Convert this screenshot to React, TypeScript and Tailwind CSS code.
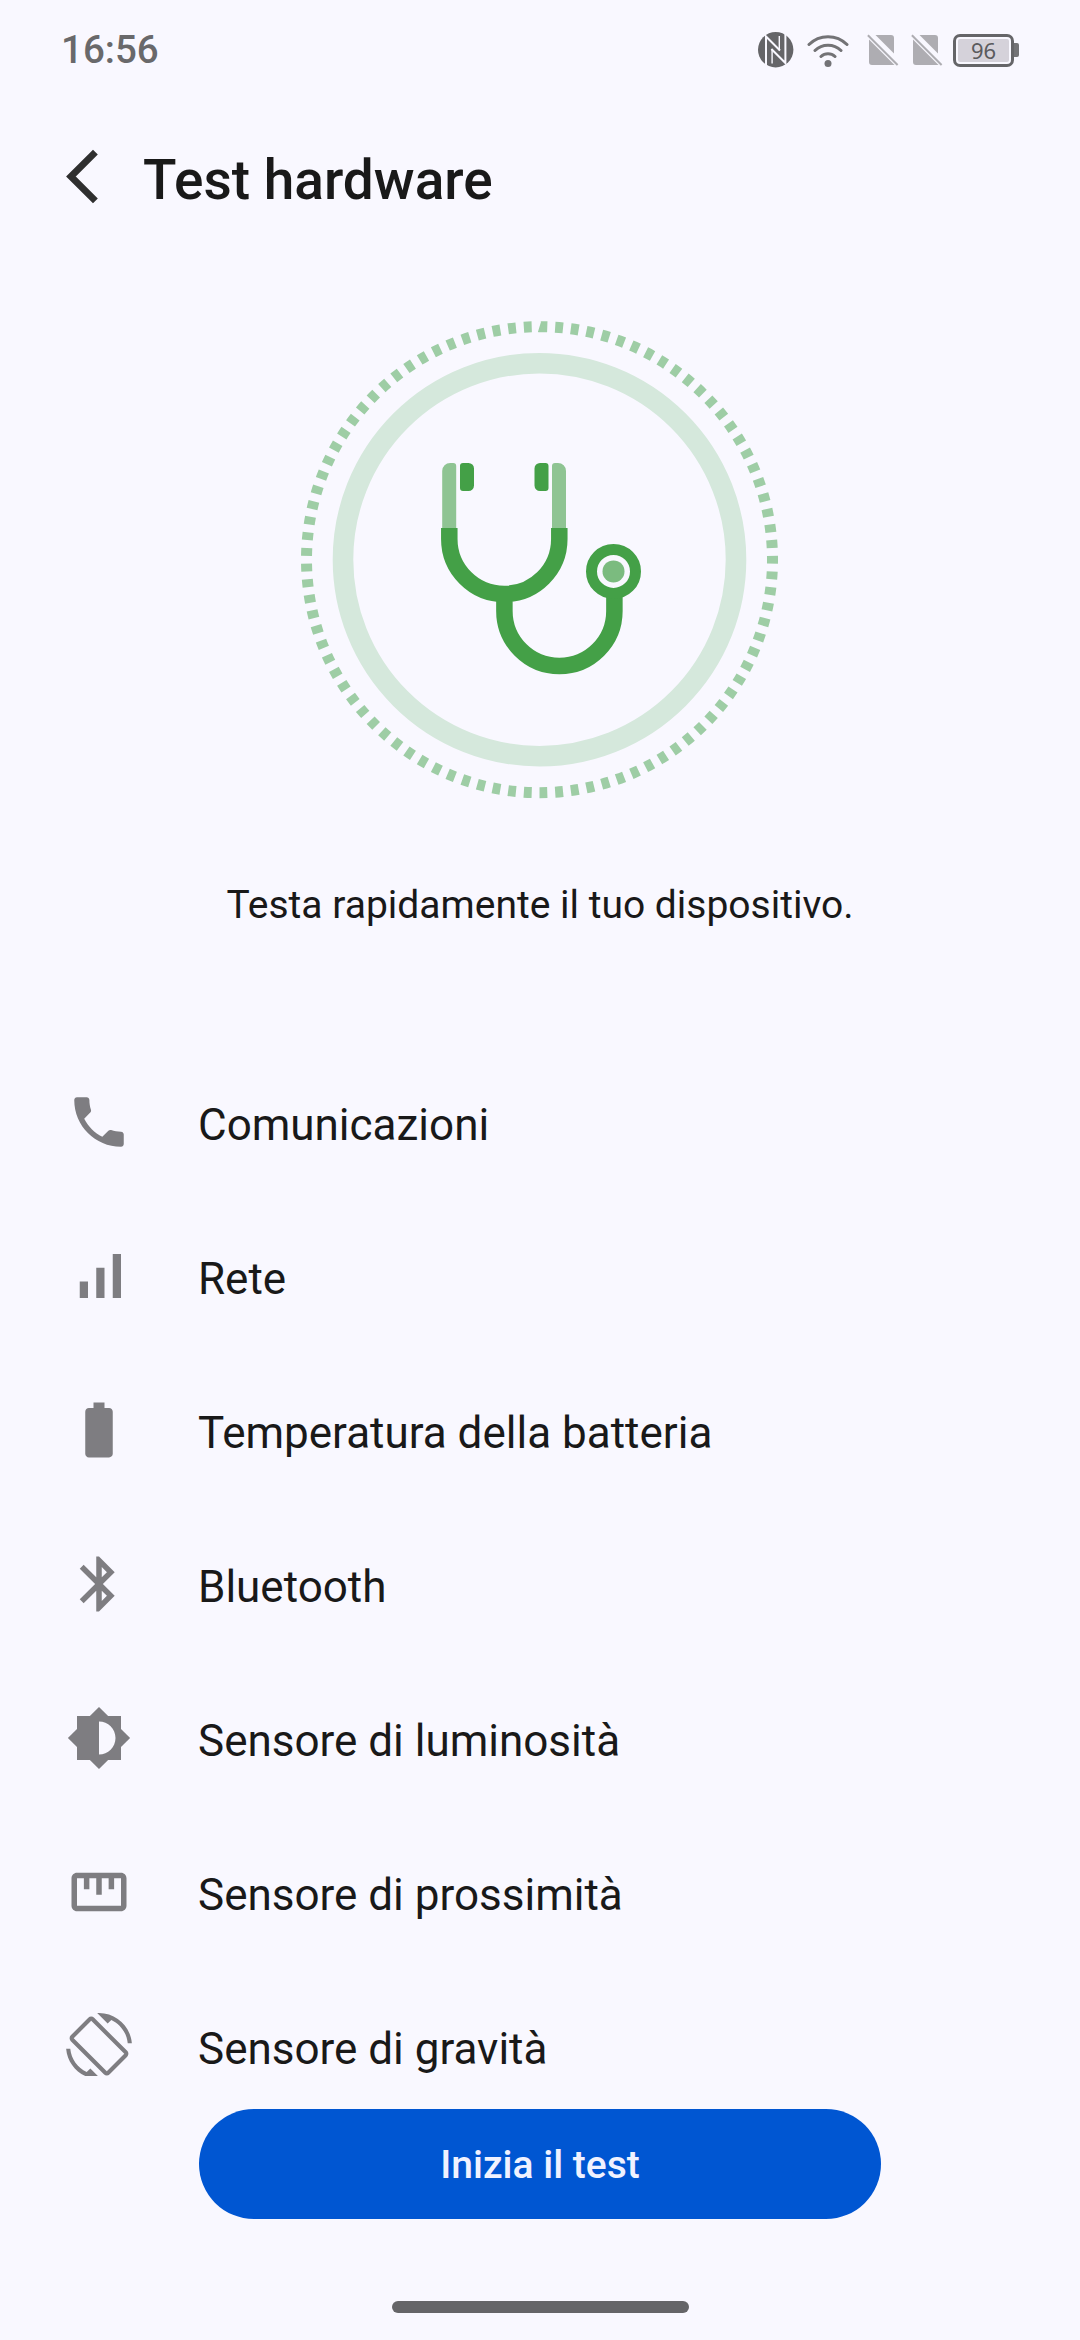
import type { ReactNode } from "react";

const IconBox = ({ children }: { children: ReactNode }) => (
  <svg viewBox="0 0 24 24" className="size-[66px] shrink-0 fill-[#7e7d81]">
    {children}
  </svg>
);

const tests = [
  {
    title: "Comunicazioni",
    icon: <path d="M6.62 10.79c1.44 2.83 3.76 5.14 6.59 6.59l2.2-2.2c.27-.27.67-.36 1.02-.24 1.12.37 2.33.57 3.57.57.55 0 1 .45 1 1V20c0 .55-.45 1-1 1-9.39 0-17-7.61-17-17 0-.55.45-1 1-1h3.5c.55 0 1 .45 1 1 0 1.25.2 2.45.57 3.57.11.35.03.74-.25 1.02l-2.2 2.2z" />,
  },
  {
    title: "Rete",
    icon: <path d="M17 4h3v16h-3zM5 14h3v6H5zM11 9h3v11h-3z" />,
  },
  {
    title: "Temperatura della batteria",
    icon: <path d="M15.67 4H14V2h-4v2H8.33C7.6 4 7 4.6 7 5.33v15.33C7 21.4 7.6 22 8.33 22h7.33c.74 0 1.34-.6 1.34-1.33V5.33C17 4.6 16.4 4 15.67 4z" />,
  },
  {
    title: "Bluetooth",
    icon: <path d="M17.71 7.71L12 2h-1v7.59L6.41 5 5 6.41 10.59 12 5 17.59 6.41 19 11 14.41V22h1l5.71-5.71-4.3-4.29 4.3-4.29zM13 5.83l1.88 1.88L13 9.59V5.83zm1.88 10.46L13 18.17v-3.76l1.88 1.88z" />,
  },
  {
    title: "Sensore di luminosità",
    icon: <path d="M20 15.31L23.31 12 20 8.69V4h-4.69L12 .69 8.69 4H4v4.69L.69 12 4 15.31V20h4.69L12 23.31 15.31 20H20v-4.69zM12 18V6c3.31 0 6 2.69 6 6s-2.69 6-6 6z" />,
  },
  {
    title: "Sensore di prossimità",
    icon: <path d="M20 5H4c-1.1 0-2 .9-2 2v10c0 1.1.9 2 2 2h16c1.1 0 2-.9 2-2V7c0-1.1-.9-2-2-2zm0 12H4V7h2.5v4h2V7H11v6h2V7h2.5v4h2V7H20v10z" />,
  },
  {
    title: "Sensore di gravità",
    icon: <path d="M16.48 2.52c3.27 1.55 5.61 4.72 5.97 8.48h1.5C23.44 4.84 18.29 0 12 0l-.66.03 3.81 3.81 1.33-1.32zm-6.25-.77c-.59-.59-1.54-.59-2.12 0L1.75 8.11c-.59.59-.59 1.54 0 2.12l12.02 12.02c.59.59 1.54.59 2.12 0l6.36-6.36c.59-.59.59-1.54 0-2.12L10.23 1.75zm4.6 19.44L2.81 9.17l6.36-6.36 12.02 12.02-6.36 6.36zm-7.31.29C4.25 19.94 1.91 16.76 1.55 13H.05C.56 19.16 5.71 24 12 24l.66-.03-3.81-3.81-1.33 1.32z" />,
  },
];

const NoSim = () => (
  <svg viewBox="0 0 32 32" className="h-8 w-8 fill-[#aeadb2]">
    <path d="M8.5 1H24a3 3 0 0 1 3 3v15.5zM2 5.5L27.5 31H5a3 3 0 0 1-3-3z" />
    <path d="M1.6.6l29.7 29.7-1.4 1.4L.2 2z" />
  </svg>
);

const StatusBar = () => (
  <div className="flex h-[100px] items-center justify-between px-[61px]">
    <span className="text-[38.5px] font-medium leading-none text-[#69696b]">16:56</span>
    <div className="flex items-center">
      {/* NFC */}
      <svg viewBox="0 0 36 36" className="mr-[13px] size-9">
        <circle cx="17.7" cy="17.7" r="17.7" fill="#656568" />
        <g fill="none" stroke="#f9f8ff">
          <path strokeWidth="2" d="M8 36V4.500L22 18.500M27.400 0v31L13.400 17" />
          <path strokeWidth="1.4" d="M21.300 18.500V4M14.100 17v14.500" />
        </g>
      </svg>
      {/* Wi-Fi */}
      <svg viewBox="0 0 42 36" className="mr-[18px] h-9 w-[42px]" fill="none" stroke="#737376" strokeWidth="3" strokeLinecap="round">
        <path d="M2 12.5a27 27 0 0 1 38 0M8 18.5a18.5 18.5 0 0 1 26 0M14 24.5a10 10 0 0 1 14 0" />
        <circle cx="21" cy="31.5" r="3.5" fill="#737376" stroke="none" />
      </svg>
      <div className="mr-[10px] flex gap-3">
        <NoSim />
        <NoSim />
      </div>
      {/* Battery */}
      <div className="flex items-center">
        <div className="flex h-[33px] w-[61px] rounded-[7px] border-[3px] border-[#656568] p-[2px]">
          <span className="flex w-full items-center justify-center rounded-xs bg-[#d5d2da] font-['Noto_Sans'] text-[22px] leading-none text-[#5b5b5e]">
            96
          </span>
        </div>
        <div className="h-[14px] w-[5px] rounded-r-[2px] bg-[#737376]" />
      </div>
    </div>
  </div>
);

const Stethoscope = () => (
  <svg viewBox="0 0 480 480" className="size-[480px]" fill="none">
    {/* 93 dashes, the first one centred on the right-hand side */}
    <circle
      cx="239.5"
      cy="239.7"
      r="233"
      stroke="#9ecda5"
      strokeWidth="11"
      pathLength="930"
      strokeDasharray="5 5"
      strokeDashoffset="2.5"
    />
    <circle cx="239.5" cy="239.7" r="196.5" stroke="#d5e8dc" strokeWidth="20.6" />
    <path
      fill="#8fc493"
      d="M142.2 211v-60a8 8 0 0 1 8-8h3a3 3 0 0 1 3 3v65zM266 211v-60a8 8 0 0 0-8-8h-3a3 3 0 0 0-3 3v65z"
    />
    <path
      fill="#44a047"
      d="M163 143h5.5a5.5 5.5 0 0 1 5.5 5.5v17a5.5 5.5 0 0 1-5.5 5.5H163a3 3 0 0 1-3-3v-22a3 3 0 0 1 3-3zM245.5 143h-5.5a5.5 5.5 0 0 0-5.5 5.5v17a5.5 5.5 0 0 0 5.5 5.5h5.5a3 3 0 0 0 3-3v-22a3 3 0 0 0-3-3z"
    />
    <g stroke="#44a047" strokeWidth="16.5">
      <path d="M149.3 208v11a55 55 0 0 0 110 0v-11M204.4 280v11a55 55 0 0 0 110 0v-17" />
      <circle cx="313.5" cy="251.4" r="22" strokeWidth="11" />
    </g>
    <circle cx="313.5" cy="251.4" r="11" fill="#7bbb7f" />
  </svg>
);

const App = () => {
  return (
    <div className="flex h-[2340px] w-[1080px] flex-col overflow-hidden bg-[#f9f8ff] font-[Roboto,sans-serif] text-[#191919]">
      <StatusBar />

      <header className="flex h-[160px] items-center pl-[66px]">
        <svg viewBox="0 0 34 56" className="mr-[43px] h-14 w-[34px] -translate-y-1" fill="none" stroke="#2f2f2f" strokeWidth="6.8">
          <path d="M29.4 4.100L4.900 28.500l24.500 24.400" />
        </svg>
        <h1 className="text-[55px] font-medium leading-none">Test hardware</h1>
      </header>

      <main className="flex h-[1816px] flex-col overflow-hidden">
        <div className="flex shrink-0 flex-col items-center pt-[60px]">
          <Stethoscope />
          <p className="mt-[82px] text-[39px] leading-[46px]">Testa rapidamente il tuo dispositivo.</p>
        </div>
        <ul className="mt-[117px]">
          {tests.map((test) => (
            <li key={test.title} className="flex h-[154px] items-center gap-[66px] px-[66px]">
              <IconBox>{test.icon}</IconBox>
              <span className="pt-1.5 text-[44px] leading-none">{test.title}</span>
            </li>
          ))}
        </ul>
      </main>

      <footer className="flex flex-col items-center pt-[33px]">
        <button className="h-[110px] w-[682px] rounded-full bg-[#0056d2] pt-0.5 text-[39px] font-medium text-[#f0f2ff]">
          Inizia il test
        </button>
        <div className="mt-[82px] h-3 w-[297px] rounded-full bg-[#656568]" />
      </footer>
    </div>
  );
};

export default App;
